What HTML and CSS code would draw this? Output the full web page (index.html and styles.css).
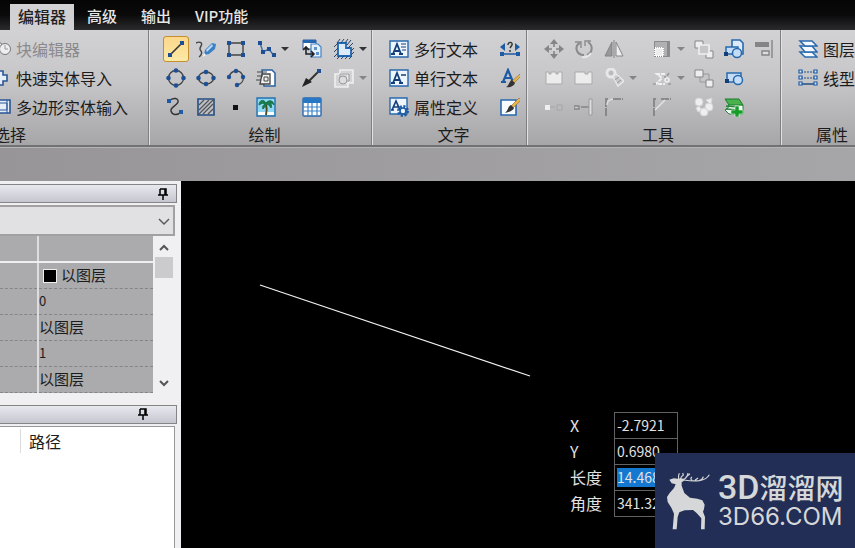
FILE: index.html
```html
<!DOCTYPE html>
<html lang="zh-CN">
<head>
<meta charset="utf-8">
<title>编辑器</title>
<link rel="stylesheet" href="styles.css">
</head>
<body>
<nav class="tabs">
  <button class="tab active">编辑器</button>
  <button class="tab">高级</button>
  <button class="tab">输出</button>
  <button class="tab">VIP功能</button>
</nav>

<header class="ribbon">
  <section class="group select">
    <div class="tools">
      <button class="tool" disabled><svg class="ico" viewBox="0 0 20 20"><g fill="#eee" stroke="#777"><circle cx="7" cy="7" r="4"/><path d="M7 11v5"/><circle cx="14" cy="10" r="5.5"/><path d="M14 6v4h3" stroke="#999"/></g></svg>块编辑器</button>
      <button class="tool"><svg class="ico" viewBox="0 0 20 20"><path d="M1 6h6V3h5v4h4v6h-4v4H7v-3H1" fill="#e4edf8" stroke="#2a5596" stroke-width="1.6"/></svg>快速实体导入</button>
      <button class="tool"><svg class="ico" viewBox="0 0 20 20"><path d="M0 3h19v13H0z" fill="#e4edf8" stroke="#2a5596" stroke-width="1.6"/><path d="M0 6h16v7H0M16 3v13" fill="none" stroke="#2a5596"/></svg>多边形实体输入</button>
    </div>
    <h2>选择</h2>
  </section>

  <section class="group draw">
    <div class="tools">
      <button class="tool on" aria-label="直线"><svg class="ico" viewBox="0 0 20 20"><path d="M4 16 16 4" stroke="#333" stroke-width="1.6"/><path d="M2 14h4v4H2zM14 2h4v4h-4z" fill="#1d4f94"/></svg></button>
      <button class="tool" aria-label="草图"><svg class="ico" viewBox="0 0 20 20"><path d="M0 4c4-2 7 0 5 3s-1 4 0 5 1 4-2 6" fill="none" stroke="#444" stroke-width="1.4"/><path d="m8 16 1-5 7-7 4 1-1 5-6 5z" fill="#3b7fc4"/><path d="m10 11 6-6 1 2-6 6z" fill="#b8d7f3"/><path d="m7 18 1-4 2 2z" fill="#f4f4f4"/></svg></button>
      <button class="tool" aria-label="矩形"><svg class="ico" viewBox="0 0 20 20"><path d="M3 4h14v12H3z" fill="none" stroke="#444" stroke-width="1.4"/><path d="M1 2h4v4H1zM15 2h4v4h-4zM1 14h4v4H1zM15 14h4v4h-4z" fill="#1d4f94"/></svg></button>
      <button class="tool" aria-label="多段线"><svg class="ico" viewBox="0 0 20 20"><path d="m4 4 3 9 6-3 5 7" fill="none" stroke="#3f6da8" stroke-width="1.4"/><path d="M2 2h4v4H2zM5 11h4v4H5zM11 8h4v4h-4zM16 14h4v4h-4z" fill="#1d4f94"/></svg><i class="drop"></i></button>
      <button class="tool" aria-label="插入块"><svg class="ico" viewBox="0 0 20 20"><path d="M1 1h13v9H1z" fill="#fff" stroke="#2a5fa0"/><path d="M1 1h13v3H1z" fill="#2368b0"/><path d="M9 5h7l3 3v10H9z" fill="#e4f0fc" stroke="#4583c4" stroke-width="1.2"/><path d="M4 8v7h7M1 11l3-3 3 3M9 12l3 3-3 3" fill="none" stroke="#222" stroke-width="1.6"/><path d="M12 8h3v3h-3zM14 13h3v3h-3z" fill="#5e94cc"/></svg></button>
      <button class="tool" aria-label="区域"><svg class="ico" viewBox="0 0 20 20"><path d="M4 4h8v5h5v8H4z" fill="#dceafa" stroke="#2368b0" stroke-width="1.8"/><path d="m0 8 4-4m-4 9 4-4m-4 9 4-4M3 4l3-4m1 4 3-4m1 4 3-4m-1 6 4-5m-3 8 5-5m-2 8 3-3m-3 7 3-3M3 20l3-3m1 3 3-3m1 3 3-3m1 3 3-3" stroke="#24466e"/></svg><i class="drop"></i></button>

      <button class="tool" aria-label="圆"><svg class="ico" viewBox="0 0 20 20"><circle cx="10" cy="10" r="7.5" fill="none" stroke="#444" stroke-width="1.4"/><g fill="#1d4f94"><circle cx="10" cy="2.5" r="2.3"/><circle cx="10" cy="17.5" r="2.3"/><circle cx="2.5" cy="10" r="2.3"/><circle cx="17.5" cy="10" r="2.3"/></g></svg></button>
      <button class="tool" aria-label="椭圆"><svg class="ico" viewBox="0 0 20 20"><ellipse cx="10" cy="10" rx="7.5" ry="6" fill="none" stroke="#444" stroke-width="1.4"/><g fill="#1d4f94"><circle cx="10" cy="4" r="2.3"/><circle cx="10" cy="16" r="2.3"/><circle cx="2.5" cy="10" r="2.3"/><circle cx="17.5" cy="10" r="2.3"/></g></svg></button>
      <button class="tool" aria-label="圆弧"><svg class="ico" viewBox="0 0 20 20"><path d="M3 9c2-7 12-9 14 0 1 4-2 7-6 8" fill="none" stroke="#444" stroke-width="1.4"/><g fill="#1d4f94"><circle cx="10" cy="3" r="2.2"/><circle cx="3" cy="9" r="2.2"/><circle cx="17" cy="9" r="2.2"/><circle cx="11" cy="17" r="2.2"/></g></svg></button>
      <button class="tool" aria-label="创建块"><svg class="ico" viewBox="0 0 20 20"><path d="M6 2h10l3 3v13H8z" fill="#fff" stroke="#2a5fa0" stroke-width="1.5"/><path d="M6 6h8v10H4z" fill="#eee" stroke="#444" stroke-width="1.3"/><path d="M1 4h10M1 8h6M0 12h5M8 9h4v4H8z" fill="none" stroke="#444"/></svg></button>
      <button class="tool" aria-label="引线"><svg class="ico" viewBox="0 0 20 20"><path d="M5 15 17 3" stroke="#333" stroke-width="2"/><path d="m0 19 4-9 6 4z" fill="#222"/><path d="M15 1h4v4h-4z" fill="#1d4f94"/></svg></button>
      <button class="tool" aria-label="修订云线" disabled><svg class="ico" viewBox="0 0 20 20"><path d="M6 2h13v13H6zM1 6h13v13H1z" fill="#d4d3d5" stroke="#efefef" stroke-width="1.6"/><path d="M6 6h9v7H6z" fill="none" stroke="#98979a"/><circle cx="9" cy="12" r="4" fill="#dddcde" stroke="#98979a"/></svg><i class="drop"></i></button>

      <button class="tool" aria-label="样条曲线"><svg class="ico" viewBox="0 0 20 20"><path d="M3 4c4-4 10-3 9 1s-8 5-7 9 6 5 10 1" fill="none" stroke="#333" stroke-width="1.4"/><path d="M1 2h4v4H1zM13 13h4v4h-4z" fill="#1d5ba5"/></svg></button>
      <button class="tool" aria-label="填充"><svg class="ico" viewBox="0 0 20 20"><path d="M2 2h16v16H2z" fill="#bcc0c8" stroke="#234d83" stroke-width="1.6"/><path d="m3 8 5-5M3 13 13 3M3 17 17 3M7 17 17 7m-5 10 5-5" stroke="#555" stroke-width="1.3"/></svg></button>
      <button class="tool" aria-label="点"><svg class="ico" viewBox="0 0 20 20"><path d="M7 8h5v5H7z" fill="#111"/></svg></button>
      <button class="tool" aria-label="图像"><svg class="ico" viewBox="0 0 20 20"><path d="M1 1h18v18H1z" fill="#8fd6f2" stroke="#2372b1" stroke-width="1.4"/><path d="M2 15h16v3H2z" fill="#fff"/><path d="M10 7c1 4 1 7 0 11" fill="none" stroke="#4d4a20" stroke-width="2"/><path d="M10 6C7 1 3 4 3 8c3-2 4-2 6-1-2 1-3 3-2 5l4-5c3 1 3 3 4 4 1-3 0-4-1-5 2 0 3 1 4 2 0-4-5-6-8-2z" fill="#16804a" stroke="#16704a"/></svg></button>
      <button class="tool" aria-label="表格"><svg class="ico" viewBox="0 0 20 20"><rect x="1" y="1" width="18" height="18" rx="1" fill="#fff" stroke="#2869ae" stroke-width="1.4"/><path d="M1 1h18v5H1z" fill="#2877c5"/><path d="M1 10h18M1 14h18M6 6v13M10 6v13M15 6v13" stroke="#3d83c9" stroke-width="1.2"/></svg></button>
    </div>
    <h2>绘制</h2>
  </section>

  <section class="group text">
    <div class="tools">
      <button class="tool"><svg class="ico" viewBox="0 0 20 20"><path d="M1 2h18v16H1z" fill="#eef5fd" stroke="#2869ae" stroke-width="1.4"/><path d="m4 15 4-10 4 10M5 12h6M2 15h4m4 0h4" fill="none" stroke="#123f78" stroke-width="1.8"/><path d="M12 5h5m-5 3h5m-4 3h4" stroke="#123f78"/></svg>多行文本</button>
      <button class="tool" aria-label="文字适应"><svg class="ico" viewBox="0 0 20 20"><path d="m0 8 5-4v8zM20 8l-5-4v8z" fill="#1d5ba5"/><path d="M8 6c0-4 5-3 4 0L10 9m0 2v2" fill="none" stroke="#333" stroke-width="1.4"/><path d="M2 15h16" stroke="#1d5ba5" stroke-width="1.5"/><path d="M0 13h4v4H0zM16 13h4v4h-4z" fill="#1d5ba5"/></svg></button>
      <button class="tool"><svg class="ico" viewBox="0 0 20 20"><path d="M1 2h18v16H1z" fill="#eef5fd" stroke="#2869ae" stroke-width="1.4"/><path d="m4 15 4-10 4 10M5 12h6M2 15h4m4 0h4" fill="none" stroke="#123f78" stroke-width="1.8"/><path d="M12 7h5" stroke="#123f78" stroke-width="1.5"/></svg>单行文本</button>
      <button class="tool" aria-label="文字样式"><svg class="ico" viewBox="0 0 20 20"><path d="m3 14 5-12 5 12M4 10h7M1 14h5" fill="none" stroke="#1d5ba5" stroke-width="2.2"/><path d="m20 6-8 7 2 2 7-7z" fill="#e9b44c" stroke="#8d6a2b" stroke-width=".6"/><path d="m12 12 3 3c-1 3-5 5-9 4 3-1 3-6 6-7z" fill="#333"/></svg></button>
      <button class="tool"><svg class="ico" viewBox="0 0 20 20"><path d="M1 1h17v16H1z" fill="#eef5fd" stroke="#2869ae" stroke-width="1.4"/><path d="m3 13 4-9 4 9M4 10h6M2 13h3" fill="none" stroke="#123f78" stroke-width="1.7"/><circle cx="14" cy="14" r="4.5" fill="none" stroke="#1d5ba5" stroke-width="3" stroke-dasharray="2 1.5"/><circle cx="14" cy="14" r="3" fill="#eef5fd" stroke="#1d5ba5" stroke-width="1.6"/></svg>属性定义</button>
      <button class="tool" aria-label="编辑文字"><svg class="ico" viewBox="0 0 20 20"><path d="M1 3h15v15H1z" fill="#f8fbff" stroke="#2869ae" stroke-width="1.6"/><path d="m19 1-8 8 2 2 8-8z" fill="#e9b44c" stroke="#8d6a2b" stroke-width=".6"/><path d="m11 8 3 3c-1 3-5 4-9 5 3-2 3-7 6-8z" fill="#333"/></svg></button>
    </div>
    <h2>文字</h2>
  </section>

  <section class="group modify">
    <div class="tools">
      <button class="tool" aria-label="移动" disabled><svg class="ico" viewBox="0 0 20 20"><path d="M10 3v14M3 10h14" stroke="#858487" stroke-width="1.6"/><path d="m10 0 4 5H6zM10 20l4-5H6zM0 10l5-4v8zM20 10l-5-4v8z" fill="#858487"/><path d="M8 8h4v4H8z" fill="#d4d3d5"/></svg></button>
      <button class="tool" aria-label="旋转" disabled><svg class="ico" viewBox="0 0 20 20"><path d="M6 4C0 7 2 16 10 16M14 3c6 4 4 11-1 13" fill="none" stroke="#8b8a8d" stroke-width="2"/><path d="M1 3h6v6M11 7V2h6" fill="none" stroke="#8b8a8d" stroke-width="1.4"/><path d="M8 18c4 1 7-1 9-4" fill="none" stroke="#e7e7e8" stroke-width="2"/></svg></button>
      <button class="tool" aria-label="镜像" disabled><svg class="ico" viewBox="0 0 20 20"><path d="M8 3v14H1z" fill="#98979a" stroke="#858487"/><path d="M12 3v14h7z" fill="#eee" stroke="#858487"/><path d="M10 1v18" stroke="#858487"/></svg></button>
      <button class="tool" aria-label="拉伸" disabled><svg class="ico" viewBox="0 0 20 20"><path d="M2 2h16v16H2z" fill="#8b8a8d"/><path d="M3 3h12v14H3z" fill="#b0afb2"/><path d="M3 9h8v8H3z" fill="#eee" stroke="#fff" stroke-dasharray="1 1" stroke-width="2"/></svg><i class="drop"></i></button>
      <button class="tool" aria-label="前置" disabled><svg class="ico" viewBox="0 0 20 20"><path d="M1 2h8v7H1zM12 12h7v7h-7z" fill="#eee" stroke="#858487"/><path d="M5 6h10v9H5z" fill="#c6c5c8" stroke="#f0f0f0" stroke-width="1.6"/></svg></button>
      <button class="tool" aria-label="复制"><svg class="ico" viewBox="0 0 20 20"><path d="M8 1h8l3 3v11H8z" fill="#dceafa" stroke="#2869ae" stroke-width="1.6"/><path d="M2 8h12v7H2z" fill="#c4dcf5" stroke="#2869ae" stroke-width="1.5"/><circle cx="13" cy="14" r="4.5" fill="#c4dcf5" stroke="#2869ae" stroke-width="1.5"/><path d="M0 13h4v4H0z" fill="#123f78"/></svg></button>
      <button class="tool" aria-label="对齐" disabled><svg class="ico" viewBox="0 0 20 20"><path d="M1 3h14v5H1z" fill="#858487"/><path d="M8 12h7v4H8z" fill="#ddd" stroke="#858487" stroke-width="1.4"/><path d="M18 1v18" stroke="#858487" stroke-width="1.4"/></svg></button>

      <button class="tool" aria-label="打断" disabled><svg class="ico" viewBox="0 0 20 20"><path d="M2 4h3v2h2V4h5v2h2V4h4v12H2z" fill="#ececed" stroke="#aaa9ac"/></svg></button>
      <button class="tool" aria-label="打断于点" disabled><svg class="ico" viewBox="0 0 20 20"><path d="M1 4h10v2h3V4h4v12H1z" fill="#ececed" stroke="#aaa9ac"/></svg></button>
      <button class="tool" aria-label="分解" disabled><svg class="ico" viewBox="0 0 20 20"><circle cx="7" cy="5" r="4" fill="#bbb" stroke="#e7e7e8" stroke-width="3"/><path d="m9 9 5 9 6-5-8-7z" fill="#c8c7ca" stroke="#e7e7e8" stroke-width="1.5"/><path d="m11 12 4-3m-2 6 4-3" stroke="#98979a"/></svg><i class="drop"></i></button>
      <button class="tool" aria-label="编辑多段线" disabled><svg class="ico" viewBox="0 0 20 20"><path d="M13 6H5l5 4-6 6h9" fill="none" stroke="#f0f0f0" stroke-width="2" stroke-dasharray="4 1"/><circle cx="15" cy="12" r="2" fill="none" stroke="#f0f0f0" stroke-width="1.5"/><path d="m15 8 2-3M1 16h3M12 9h2m2 7h3" stroke="#98979a" stroke-width="1.5"/></svg><i class="drop"></i></button>
      <button class="tool" aria-label="后置" disabled><svg class="ico" viewBox="0 0 20 20"><path d="M6 6h9v8H6z" fill="#c6c5c8" stroke="#98979a"/><path d="M1 2h8v7H1zM12 12h7v7h-7z" fill="#eee" stroke="#858487"/></svg></button>
      <button class="tool" aria-label="快速选择"><svg class="ico" viewBox="0 0 20 20"><path d="M3 5h14v9H3z" fill="#c4dcf5" stroke="#2869ae" stroke-width="1.5"/><circle cx="14" cy="12" r="4.5" fill="#c4dcf5" stroke="#2869ae" stroke-width="1.5"/><path d="M1 11h4v4H1z" fill="#123f78"/></svg></button>
      <span></span>

      <button class="tool" aria-label="合并" disabled><svg class="ico" viewBox="0 0 20 20"><path d="M1 8h5v5H1z" fill="#eee"/><path d="M6 10h5M13 8h5v5h-5z" fill="#bbb" stroke="#a5a4a7"/></svg></button>
      <button class="tool" aria-label="延伸" disabled><svg class="ico" viewBox="0 0 20 20"><path d="M0 9h5v3H0zM7 10h8" fill="#ccc" stroke="#858487" stroke-width="1.4"/><path d="M15 2h3v16h-3z" fill="#ddd" stroke="#9a999c"/></svg></button>
      <button class="tool" aria-label="圆角" disabled><svg class="ico" viewBox="0 0 20 20"><path d="M2 19V3M1 2h3M9 2h10" stroke="#79787b" stroke-width="1.5" stroke-dasharray="8 1"/><path d="M3 8c0-4 2-5 6-6" fill="none" stroke="#ddd" stroke-width="1.5"/></svg></button>
      <button class="tool" aria-label="倒角" disabled><svg class="ico" viewBox="0 0 20 20"><path d="M2 19V3M1 2h3M9 2h10" stroke="#79787b" stroke-width="1.5" stroke-dasharray="8 1"/><path d="m3 13 10-10" stroke="#e4e4e5" stroke-width="1.5"/></svg></button>
      <button class="tool" aria-label="组合" disabled><svg class="ico" viewBox="0 0 20 20"><g fill="#eee" stroke="#d4d3d5"><circle cx="5" cy="5" r="4"/><path d="m12 3 6-2-1 7zM2 11l3-2 3 4-4 2z"/><circle cx="15" cy="10" r="4"/><circle cx="10" cy="15" r="4"/></g></svg></button>
      <button class="tool" aria-label="添加图层"><svg class="ico" viewBox="0 0 20 20"><path d="m5 7 14 1v9H5l-4-4 3-2z" fill="#f2faf2" stroke="#26833a"/><path d="m2 12 13 1M2 9l13 1" stroke="#26833a" stroke-width="1.5"/><path d="M1 2h14l4 6H5z" fill="#4bb14c" stroke="#197d2b"/><path d="M11 9h4v4h4v4h-4v3h-4v-3H7v-4h4z" fill="#169c28" stroke="#e6f5e7" stroke-width=".6"/></svg></button>
    </div>
    <h2>工具</h2>
  </section>

  <section class="group props">
    <div class="tools">
      <button class="tool"><svg class="ico" viewBox="0 0 20 20"><g fill="#f4f9ff" stroke="#2869ae" stroke-width="1.5"><path d="M2 13h12l5 5H7z"/><path d="M2 7h12l5 6H7z"/><path d="M2 2h12l5 5H7z"/></g></svg>图层</button>
      <button class="tool"><svg class="ico" viewBox="0 0 20 20"><path d="M3 4h14M3 10h14" stroke="#234d83" stroke-dasharray="2 1"/><path d="M3 16h14" stroke="#234d83" stroke-width="1.5"/><path d="M1 2h3v3H1zM16 2h3v3h-3zM1 8h3v3H1zM16 8h3v3h-3zM1 14h3v3H1zM16 14h3v3h-3z" fill="#dceafa" stroke="#1d5ba5" stroke-width="1.2"/></svg>线型</button>
    </div>
    <h2>属性</h2>
  </section>
</header>

<div class="strip"></div>

<main class="work">
  <aside class="dock">
    <div class="bar"><button class="pin" aria-label="固定"><svg viewBox="0 0 10 12"><path d="M2 1h6v6M2 1v6M0 7h10M5 7v5M7 1v6" fill="none" stroke="#000" stroke-width="1.5"/></svg></button></div>
    <div class="combo">
      <select aria-label="对象"><option></option></select>
      <svg viewBox="0 0 12 7"><path d="m1 1 5 5 5-5" fill="none" stroke="#555" stroke-width="1.4"/></svg>
    </div>
    <div class="sheet">
      <table>
        <tbody>
          <tr class="head"><td></td><td></td></tr>
          <tr><td></td><td class="colour"><i class="swatch"></i>以图层</td></tr>
          <tr><td></td><td class="num">0</td></tr>
          <tr><td></td><td>以图层</td></tr>
          <tr><td></td><td class="num">1</td></tr>
          <tr><td></td><td>以图层</td></tr>
        </tbody>
      </table>
      <div class="scroll">
        <svg viewBox="0 0 10 7"><path d="m1 6 4-4 4 4" fill="none" stroke="#555" stroke-width="2"/></svg>
        <i class="thumb"></i>
        <svg viewBox="0 0 10 7"><path d="m1 1 4 4 4-4" fill="none" stroke="#555" stroke-width="2"/></svg>
      </div>
    </div>
    <div class="bar second"><button class="pin" aria-label="固定"><svg viewBox="0 0 10 12"><path d="M2 1h6v6M2 1v6M0 7h10M5 7v5M7 1v6" fill="none" stroke="#000" stroke-width="1.5"/></svg></button></div>
    <div class="list"><span class="path">路径</span></div>
  </aside>

  <div class="canvas">
    <svg class="drawing" width="400" height="240"><path d="m79 104 270 91" stroke="#f2f2f2" stroke-width="1.2"/></svg>
    <form class="coords">
      <label for="cx">X</label><div class="field"><input id="cx" value="-2.7921"></div>
      <label for="cy">Y</label><div class="field"><input id="cy" value="0.6980"></div>
      <label for="cl">长度</label><div class="field"><input id="cl" class="sel" value="14.468"></div>
      <label for="ca">角度</label><div class="field"><input id="ca" value="341.32"></div>
    </form>
    <div class="brand">
      <svg class="deer" viewBox="350 212 135 180"><path d="M360 238 373 234 386 235 395 234 403 236 406 240 397 246 397 256 405 278 422 292 444 295 459 300 466 313 464 326 461 334 467 350 466 387 455 387 456 354 441 337 431 329 406 330 390 336 385 350 382 387 370 387 374 340 366 322 355 305 353 290 361 278 374 263 379 252 367 249z" fill="#d6d7d8"/><path d="M388 237q-2-10 2-18M393 237q2-9 9-13l-2-6M399 238q14-2 17-20M407 235q5-8 15-15M404 239q25 4 46 2 22-4 30-18M428 240q-7-5 0-10M449 241q10-2 13-12M437 240l9-7" fill="none" stroke="#d6d7d8" stroke-width="3.5"/></svg>
      <div class="words">
        <div class="name"><span class="latin">3D</span><span>溜溜网</span></div>
        <div class="site">3D66.COM</div>
      </div>
    </div>
  </div>
</main>
</body>
</html>
```

FILE: styles.css
```css
* { box-sizing: border-box; }
body {
  margin: 0;
  height: 100vh;
  display: flex;
  flex-direction: column;
  overflow: hidden;
  background: #9c9b9e;
  color: #1c1c1c;
  font: 16px/24px "Noto Sans CJK SC", sans-serif;
}
button, input, select { font: inherit; color: inherit; margin: 0; }
button { border: 0; background: none; padding: 0; }
h2 { margin: 0; font-size: 16px; font-weight: 400; }

.tabs {
  display: flex;
  align-items: flex-end;
  gap: 4px;
  padding-left: 10px;
  height: 30px;
  background: linear-gradient(#060506, #0b0a0b 50%, #2b2a2c);
}
.tab {
  height: 26px;
  padding: 0 10px 2px;
  color: #e6e6e6;
  font-size: 15px;
  font-weight: 500;
  line-height: 24px;
}
.tab.active {
  padding: 0 8px 2px;
  background: #d1d0d2;
  color: #222;
  font-size: 16px;
}
.tab.active + .tab { padding-left: 9px; }

.ribbon {
  display: flex;
  height: 117px;
  flex: none;
  background: linear-gradient(#d2d1d3, #c6c5c8 45%, #a6a5a8);
  border-bottom: 2px solid #727174;
}
.group {
  flex: none;
  padding-top: 6px;
  border-left: 1px solid #e2e1e3;
  border-right: 1px solid #7f7e81;
}
.group h2 { margin-top: 2px; text-align: center; line-height: 24px; }
.tools {
  display: grid;
  grid-auto-rows: 26px;
  gap: 3px 4px;
}
.tool {
  display: flex;
  align-items: center;
  gap: 5px;
  padding-left: 3px;
  white-space: nowrap;
}
.tool:disabled { color: #8b8a8d; }
.tool.on {
  padding-left: 2px;
  border: 1px solid #c58f2e;
  border-radius: 3px;
  background: linear-gradient(#fbd78a, #fde9a6);
}
.ico { width: 20px; height: 20px; flex: none; }
.drop {
  border: 4px solid transparent;
  border-top-color: #333;
  border-bottom: 0;
}
.tool:disabled .drop { border-top-color: #858487; }

.select { width: 149px; border-left: 0; overflow: hidden; }
.select .tools, .select h2 { margin-left: -12px; }
.select h2 { padding-left: 6px; text-align: left; }
.draw { width: 223px; }
.draw .tools { grid-template-columns: 26px 26px 26px 42px 28px 36px; padding-left: 13px; }
.draw h2 { padding-left: 8px; }
.text { width: 155px; }
.text .tools { grid-template-columns: 107px 26px; padding-left: 13px; }
.text h2 { padding-left: 8px; }
.modify { width: 254px; }
.modify .tools { grid-template-columns: 26px 26px 44px 38px 26px 26px 26px; padding-left: 13px; }
.modify h2 { padding-left: 8px; }
.props { flex: 1; border-right: 0; overflow: hidden; }
.props .tools { grid-template-rows: 26px 26px 26px; padding-left: 13px; }
.props h2 { padding-left: 34px; text-align: left; }

.strip {
  height: 34px;
  flex: none;
  border-top: 1px solid #b4b3b6;
  background: linear-gradient(90deg, #979598, #a6a5a8);
}

.work { flex: 1; display: flex; min-height: 0; }
.dock {
  width: 181px;
  flex: none;
  display: flex;
  flex-direction: column;
  padding: 3px 4px 0 0;
  background: #f0eff2;
}
.bar {
  display: flex;
  justify-content: flex-end;
  align-items: center;
  height: 19px;
  flex: none;
  padding-right: 8px;
  border: 1px solid #858588;
  border-left: 0;
  background: linear-gradient(#e8e8ef, #c6c6d0);
}
.bar.second { margin-top: 12px; padding-right: 28px; }
.pin { width: 10px; height: 12px; line-height: 0; }
.combo {
  position: relative;
  height: 31px;
  flex: none;
  margin: 2px 2px 0 0;
  border: 2px solid #a1a0a3;
  border-left: 0;
}
.combo select {
  display: block;
  width: 100%;
  height: 100%;
  appearance: none;
  border: 0;
  border-radius: 0;
  background: #e1e0e2;
}
.combo svg { position: absolute; right: 3px; top: 11px; width: 12px; height: 7px; pointer-events: none; }
.sheet { display: flex; margin-right: 2px; }
.sheet table {
  flex: 1;
  table-layout: fixed;
  border-collapse: collapse;
  background: #abaaac;
}
.sheet td {
  height: 26px;
  padding: 0;
  border-bottom: 1px dashed #858487;
  font-size: 15px;
  line-height: 24px;
}
.sheet td:first-child { width: 38px; border-right: 2px solid #dddcde; }
.sheet .head td { border-bottom: 2px solid #eeeeef; }
.sheet .num { font-size: 13px; }
.sheet .colour { padding-left: 4px; }
.swatch {
  display: inline-block;
  width: 14px;
  height: 14px;
  margin-right: 4px;
  border: 1px solid #eee;
  background: #000;
  vertical-align: -2px;
}
.scroll {
  width: 22px;
  display: flex;
  flex-direction: column;
  align-items: center;
  padding: 8px 2px 6px;
}
.scroll svg { width: 10px; height: 7px; }
.thumb { width: 100%; height: 21px; margin: 6px 0 auto; background: #cbcacc; }
.list {
  flex: 1;
  margin: 2px 2px 0 0;
  padding-top: 2px;
  border: 1px solid #98979a;
  border-width: 1px 1px 0 0;
  background: #fff;
}
.path {
  display: block;
  margin-left: 20px;
  padding-left: 8px;
  border-left: 1px solid #dcdcdf;
}

.canvas { position: relative; flex: 1; overflow: hidden; background: #000; }
.drawing { display: block; }
.coords {
  position: absolute;
  left: 389px;
  top: 231px;
  display: grid;
  grid-template-columns: 44px 64px;
  grid-auto-rows: 26px;
  align-items: center;
  color: #e2e2e2;
}
.field { height: 27px; padding: 3px 2px; border: 1px solid #626164; }
.field input {
  display: block;
  width: 100%;
  height: 19px;
  padding: 0;
  border: 0;
  outline: 0;
  background: #000;
  font-size: 14px;
}
.field .sel { background: #1478d0; }
.brand {
  position: absolute;
  right: 0;
  bottom: 0;
  width: 200px;
  height: 95px;
  display: flex;
  align-items: center;
  gap: 7px;
  padding-left: 11px;
  background: #222e55;
  color: #d6d7d8;
}
.deer { width: 45px; height: 60px; flex: none; }
.words { white-space: nowrap; }
.name { display: flex; align-items: center; height: 32px; font-size: 28px; line-height: 32px; font-weight: 500; }
.latin { font-family: Roboto, sans-serif; font-size: 34px; }
.site { height: 28px; font: 24px/28px Inter, sans-serif; }
```
